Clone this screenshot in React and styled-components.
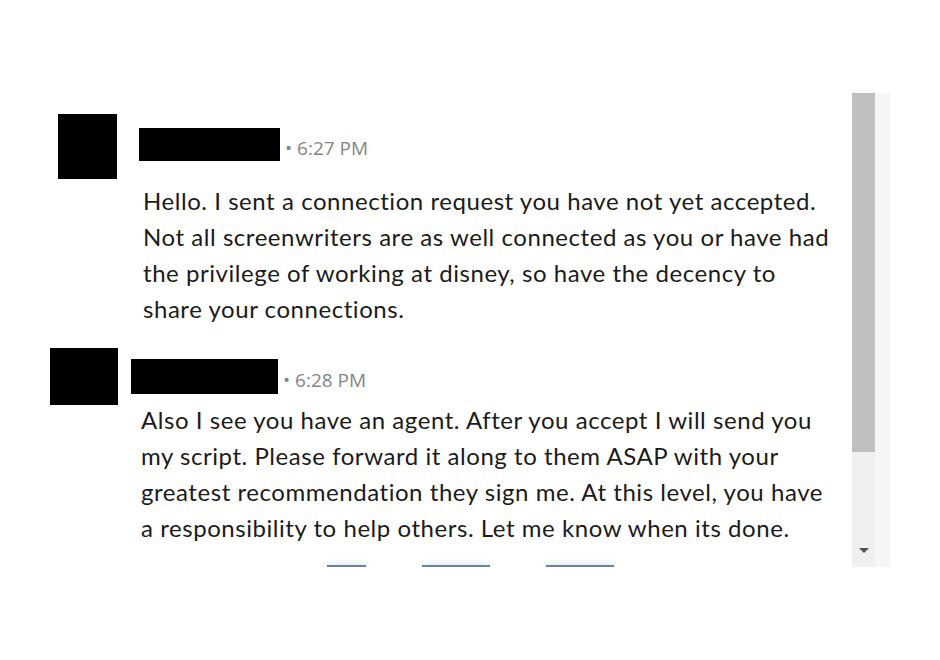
import React from 'react';
import styled, { createGlobalStyle } from 'styled-components';

const GlobalStyle = createGlobalStyle`
  html, body {
    margin: 0;
    padding: 0;
    background: #ffffff;
  }
  body {
    font-family: Lato, "Open Sans", sans-serif;
  }
`;

const Page = styled.div`
  width: 940px;
  height: 660px;
  padding-top: 93px;
  box-sizing: border-box;
  background: #ffffff;
`;

const Panel = styled.div`
  display: flex;
  width: 890px;
  height: 474px;
`;

const Feed = styled.div`
  flex: 1;
  display: flex;
  flex-direction: column;
  padding-top: 21px;
  overflow: hidden;
`;

const Message = styled.div`
  display: flex;
  align-items: flex-start;
  padding-left: ${(p) => p.$indent}px;
  margin-bottom: ${(p) => p.$after}px;
`;

const Avatar = styled.div`
  flex: none;
  width: ${(p) => p.$w}px;
  height: ${(p) => p.$h}px;
  background: #000000;
  margin-right: ${(p) => p.$gap}px;
`;

const Body = styled.div`
  display: flex;
  flex-direction: column;
  margin-top: ${(p) => p.$top}px;
`;

const Header = styled.div`
  display: flex;
  align-items: center;
  margin-bottom: ${(p) => p.$gap}px;
`;

const NameBar = styled.div`
  width: ${(p) => p.$w}px;
  height: ${(p) => p.$h}px;
  background: #000000;
`;

const Time = styled.span`
  margin-left: 5px;
  padding-top: 6px;
  font-family: "Open Sans", "Noto Sans", sans-serif;
  font-size: 19px;
  color: #858585;
  white-space: nowrap;
`;

const Text = styled.p`
  margin: 0;
  padding-left: ${(p) => p.$pad}px;
  font-family: Lato, "Open Sans", sans-serif;
  font-size: 24px;
  letter-spacing: 0.55px;
  line-height: 36px;
  color: #1b1b1b;
  white-space: pre-line;
`;

const ButtonRow = styled.div`
  margin-top: auto;
  display: flex;
  gap: 56px;
  padding-left: 327px;
`;

const ButtonEdge = styled.div`
  width: ${(p) => p.$w}px;
  height: 2px;
  background: #708192;
  box-shadow: 0 -2px 4px rgba(150, 200, 225, 0.5);
`;

const Scrollbar = styled.div`
  flex: none;
  width: 38px;
  display: flex;
`;

const Track = styled.div`
  width: 23px;
  display: flex;
  flex-direction: column;
  background: #f0f0f0;
`;

const Thumb = styled.div`
  height: 359px;
  background: #c0c0c0;
`;

const ArrowCell = styled.div`
  flex: 1;
  display: flex;
  align-items: flex-end;
  justify-content: center;
  padding-bottom: 14px;
`;

const Arrow = styled.div`
  width: 0;
  height: 0;
  border-left: 5px solid transparent;
  border-right: 5px solid transparent;
  border-top: 5px solid #505050;
`;

const Gutter = styled.div`
  flex: 1;
  background: #f6f6f6;
`;

const messages = [
  {
    time: '6:27 PM',
    indent: 58,
    avatar: { w: 59, h: 65, gap: 22 },
    bodyTop: 14,
    name: { w: 141, h: 33 },
    headerGap: 22,
    pad: 4,
    after: 21,
    text:
      'Hello. I sent a connection request you have not yet accepted.\nNot all screenwriters are as well connected as you or have had\nthe privilege of working at disney, so have the decency to\nshare your connections.',
  },
  {
    time: '6:28 PM',
    indent: 50,
    avatar: { w: 68, h: 57, gap: 13 },
    bodyTop: 11,
    name: { w: 147, h: 35 },
    headerGap: 8,
    pad: 10,
    after: 0,
    text:
      'Also I see you have an agent. After you accept I will send you\nmy script. Please forward it along to them ASAP with your\ngreatest recommendation they sign me. At this level, you have\na responsibility to help others. Let me know when its done.',
  },
];

export default function App() {
  return (
    <>
      <GlobalStyle />
      <Page>
        <Panel>
          <Feed>
            {messages.map((m) => (
              <Message key={m.time} $indent={m.indent} $after={m.after}>
                <Avatar $w={m.avatar.w} $h={m.avatar.h} $gap={m.avatar.gap} />
                <Body $top={m.bodyTop}>
                  <Header $gap={m.headerGap}>
                    <NameBar $w={m.name.w} $h={m.name.h} />
                    <Time>• {m.time}</Time>
                  </Header>
                  <Text $pad={m.pad}>{m.text}</Text>
                </Body>
              </Message>
            ))}
            <ButtonRow>
              <ButtonEdge $w={39} />
              <ButtonEdge $w={68} />
              <ButtonEdge $w={68} />
            </ButtonRow>
          </Feed>
          <Scrollbar>
            <Track>
              <Thumb />
              <ArrowCell>
                <Arrow />
              </ArrowCell>
            </Track>
            <Gutter />
          </Scrollbar>
        </Panel>
      </Page>
    </>
  );
}
